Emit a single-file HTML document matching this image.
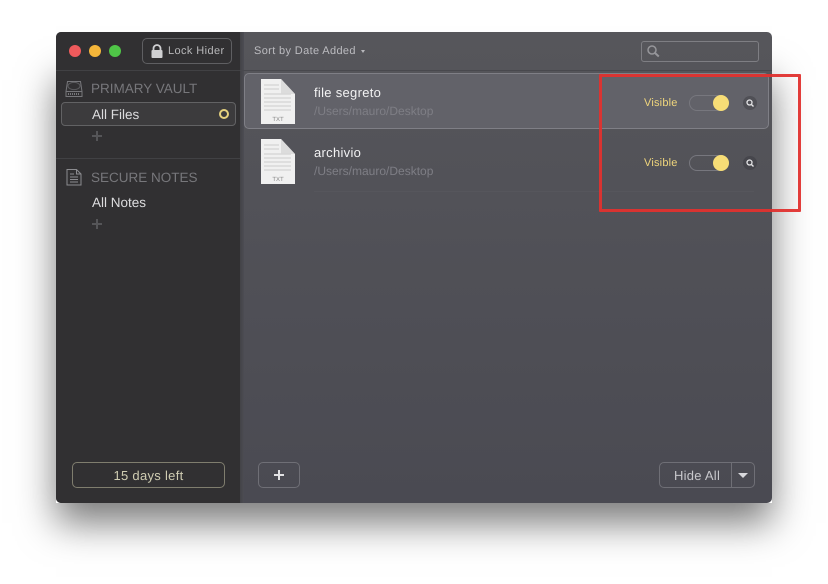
<!DOCTYPE html>
<html><head><meta charset="utf-8"><style>
html,body{margin:0;padding:0;background:#fff;width:828px;height:584px;overflow:hidden}
body{position:relative;font-family:"Liberation Sans",sans-serif;text-rendering:geometricPrecision}
#all{position:absolute;left:0;top:0;width:828px;height:584px;filter:blur(.35px)}
.a,.t,.b{position:absolute}
.t{white-space:nowrap;line-height:16px}
.b{box-sizing:border-box;border:1px solid #6f6f75;border-radius:5px}
svg{position:absolute;overflow:visible}
</style></head><body><div id="all">
<div class="a" style="left:56px;top:60px;width:716px;height:443px;box-shadow:0 20px 36px rgba(0,0,0,.52)"></div>
<div class="a" id="win" style="left:56px;top:32px;width:716px;height:471px;border-radius:5px;overflow:hidden;background:linear-gradient(#56565b,#4a4a52)">
  <div class="a" style="left:0;top:0;width:184px;height:471px;background:#313032"></div>
  <div class="a" style="left:184px;top:0;width:4px;height:471px;background:linear-gradient(90deg,#434347,#4c4c53)"></div>
  <div class="a" style="left:0;top:38px;width:184px;height:1px;background:#414144"></div>
  <div class="a" style="left:184px;top:38px;width:532px;height:1px;background:#48484d"></div>
  <div class="a" style="left:0;top:126px;width:184px;height:1px;background:#414144"></div>
</div>
<!-- traffic lights -->
<div class="a" style="left:69px;top:45px;width:12px;height:12px;border-radius:50%;background:#ee5a5c"></div>
<div class="a" style="left:89px;top:45px;width:12px;height:12px;border-radius:50%;background:#f5b63a"></div>
<div class="a" style="left:109px;top:45px;width:12px;height:12px;border-radius:50%;background:#4fc547"></div>
<!-- lock button -->
<div class="b" style="left:142px;top:38px;width:90px;height:26px;border-color:#5f5f62"></div>
<svg style="left:150px;top:44px" width="14" height="14" viewBox="0 0 14 14"><path d="M3.500 6V4.500a3.500 3.500 0 0 1 7 0V6" fill="none" stroke="#d0d0d2" stroke-width="1.800"/><rect x="1.500" y="6" width="11" height="8" rx="1" fill="#d0d0d2"/></svg>
<div class="t" style="left:168px;top:43px;font-size:11px;letter-spacing:.4px;color:#b8b8ba">Lock Hider</div>
<!-- toolbar -->
<div class="t" style="left:254px;top:43px;font-size:11px;letter-spacing:.36px;color:#bcbcc0">Sort by Date Added</div>
<svg style="left:361px;top:50px" width="4" height="4"><path d="M0 0H4L2 3Z" fill="#b8b8bc"/></svg>
<div class="b" style="left:641px;top:41px;width:118px;height:21px;border-color:#7e7e83;border-radius:3px"></div>
<svg style="left:646px;top:44px" width="15" height="15" viewBox="0 0 15 15"><circle cx="6" cy="6" r="4" fill="none" stroke="#96969a" stroke-width="1.500"/><path d="M9 9l3.800 3.500" stroke="#96969a" stroke-width="2"/></svg>
<!-- sidebar -->
<svg style="left:65px;top:80px" width="18" height="18" viewBox="0 0 18 18" fill="none" stroke="#77777b"><path d="M2.500 1.500H15.500L17 11.500V16.500H1V11.500Z"/><path d="M1 11.500H17"/><ellipse cx="9" cy="6" rx="6" ry="3.600" stroke="#5a5a5d"/><path d="M3 14H15" stroke-dasharray="1 1" stroke-width="2"/></svg>
<div class="t" style="left:91px;top:81px;font-size:13.500px;color:#77777b">PRIMARY VAULT</div>
<div class="b" style="left:61px;top:102px;width:175px;height:24px;background:#3c3b3d;border-color:#626264;border-radius:4px"></div>
<div class="t" style="left:92px;top:107px;font-size:13.500px;color:#dcdcde">All Files</div>
<div class="a" style="left:219px;top:109px;width:6px;height:6px;border:2px solid #e6d27e;border-radius:50%"></div>
<div class="a" style="left:92px;top:135px;width:10px;height:2px;background:#555558"></div>
<div class="a" style="left:96px;top:131px;width:2px;height:10px;background:#555558"></div>
<svg style="left:66px;top:168px" width="16" height="18" viewBox="0 0 16 18" fill="none" stroke="#8c8c90"><path d="M1 1.500H10.500L15 6V17H1Z"/><path d="M10.500 1.500V6H15M4 6H8M4 9H12M4 11.500H12M4 14H12"/></svg>
<div class="t" style="left:91px;top:170px;font-size:13.500px;color:#77777b">SECURE NOTES</div>
<div class="t" style="left:92px;top:195px;font-size:13.500px;color:#dcdcde">All Notes</div>
<div class="a" style="left:92px;top:223px;width:10px;height:2px;background:#555558"></div>
<div class="a" style="left:96px;top:219px;width:2px;height:10px;background:#555558"></div>
<div class="b" style="left:72px;top:462px;width:153px;height:26px;border-color:#7f7d6e"></div>
<div class="t" style="left:72px;top:468px;width:153px;text-align:center;font-size:13px;letter-spacing:.3px;color:#cfccb2">15 days left</div>
<!-- rows -->
<div class="b" style="left:244px;top:73px;width:525px;height:56px;background:#626269;border-color:#7f7f86"></div>
<div class="a" style="left:314px;top:191px;width:440px;height:1px;background:#56565c"></div>
<svg style="left:261px;top:79px" width="34" height="45" viewBox="0 0 34 45"><path d="M0 0H20L34 15V45H0Z" fill="#f0f0f0"/><path d="M20 0V15H34Z" fill="#dcdcdc"/><path d="M3 6H18M3 10H18M3 15H30M3 19H30M3 23H30M3 27H30M3 31H30" stroke="#d8d8d8" stroke-width="1.500"/><text x="17" y="42" font-size="6" text-anchor="middle" fill="#888" font-family="Liberation Sans">TXT</text></svg>
<svg style="left:261px;top:139px" width="34" height="45" viewBox="0 0 34 45"><path d="M0 0H20L34 15V45H0Z" fill="#f0f0f0"/><path d="M20 0V15H34Z" fill="#dcdcdc"/><path d="M3 6H18M3 10H18M3 15H30M3 19H30M3 23H30M3 27H30M3 31H30" stroke="#d8d8d8" stroke-width="1.500"/><text x="17" y="42" font-size="6" text-anchor="middle" fill="#888" font-family="Liberation Sans">TXT</text></svg>
<div class="t" style="left:314px;top:85px;font-size:13px;letter-spacing:.3px;color:#f2f2f3">file segreto</div>
<div class="t" style="left:314px;top:103px;font-size:12px;letter-spacing:0;color:#7e7e85">/Users/mauro/Desktop</div>
<div class="t" style="left:314px;top:145px;font-size:13px;letter-spacing:.3px;color:#f2f2f3">archivio</div>
<div class="t" style="left:314px;top:163px;font-size:12px;letter-spacing:0;color:#7e7e85">/Users/mauro/Desktop</div>
<!-- controls row 1 -->
<div class="t" style="left:644px;top:95px;font-size:11px;letter-spacing:.2px;color:#f0d67c">Visible</div>
<div class="b" style="left:689px;top:95px;width:40px;height:16px;border-radius:8px;border-color:#77777e"></div>
<div class="a" style="left:713px;top:95px;width:16px;height:16px;border-radius:50%;background:#f7dd76"></div>
<div class="a" style="left:743px;top:96px;width:14px;height:14px;border-radius:50%;background:#505056"></div>
<svg style="left:746px;top:99px" width="8" height="8" viewBox="0 0 8 8"><circle cx="3.500" cy="3.500" r="2.500" fill="none" stroke="#e2e2e4" stroke-width="1.300"/><path d="M5.200 5.200L7.500 7.500" stroke="#e2e2e4" stroke-width="1.400"/></svg>
<!-- controls row 2 -->
<div class="t" style="left:644px;top:155px;font-size:11px;letter-spacing:.2px;color:#f0d67c">Visible</div>
<div class="b" style="left:689px;top:155px;width:40px;height:16px;border-radius:8px;border-color:#77777e"></div>
<div class="a" style="left:713px;top:155px;width:16px;height:16px;border-radius:50%;background:#f7dd76"></div>
<div class="a" style="left:743px;top:156px;width:14px;height:14px;border-radius:50%;background:#46464c"></div>
<svg style="left:746px;top:159px" width="8" height="8" viewBox="0 0 8 8"><circle cx="3.500" cy="3.500" r="2.500" fill="none" stroke="#e2e2e4" stroke-width="1.300"/><path d="M5.200 5.200L7.500 7.500" stroke="#e2e2e4" stroke-width="1.400"/></svg>
<!-- bottom buttons -->
<div class="b" style="left:258px;top:462px;width:42px;height:26px;border-color:#6f6f76"></div>
<div class="a" style="left:274px;top:474px;width:10px;height:2px;background:#e2e2e4"></div>
<div class="a" style="left:278px;top:470px;width:2px;height:10px;background:#e2e2e4"></div>
<div class="b" style="left:659px;top:462px;width:96px;height:26px;border-color:#6f6f76"></div>
<div class="a" style="left:731px;top:463px;width:1px;height:24px;background:#6f6f76"></div>
<div class="t" style="left:674px;top:468px;font-size:13px;letter-spacing:.25px;color:#c8c8cc">Hide All</div>
<svg style="left:738px;top:473px" width="10" height="6"><path d="M0 0H10L5 5Z" fill="#d8d8dc"/></svg>
<!-- red annotation -->
<div class="a" style="left:598.500px;top:73.500px;width:202px;height:138px;box-sizing:border-box;border:3px solid #e0322f;border-radius:1px;opacity:.95"></div>
</div></body></html>
